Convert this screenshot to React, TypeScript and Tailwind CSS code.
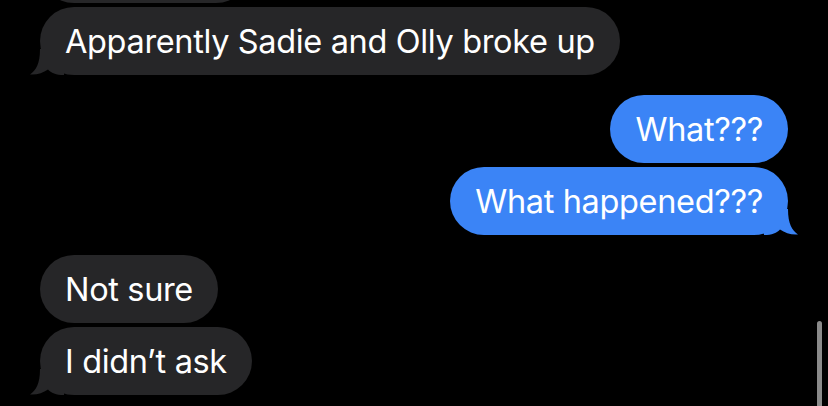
const grayTail = (
  <svg
    className="absolute -left-[10px] bottom-0 h-[26px] w-[34px]"
    viewBox="0 0 34 26"
    aria-hidden
  >
    <path d="M10 0 C10 15 6 21 0 25.5 C7 26 13 24 18 20.5 C21 24 26 26 34 26 L34 0 Z" fill="#262628" />
  </svg>
)

const blueTail = (
  <svg
    className="absolute -right-[10px] bottom-0 h-[26px] w-[34px]"
    viewBox="0 0 34 26"
    aria-hidden
  >
    <path d="M24 0 C24 15 28 21 34 25.5 C27 26 21 24 16 20.5 C13 24 8 26 0 26 L0 0 Z" fill="#3b84f6" />
  </svg>
)

function Received({ text, tail }: { text: string; tail?: boolean }) {
  return (
    <div className="relative flex h-[68px] w-fit items-center rounded-[34px] bg-[#262628] px-[25px] pt-[2px]">
      {tail && grayTail}
      <span className="relative">{text}</span>
    </div>
  )
}

function Sent({ text, tail }: { text: string; tail?: boolean }) {
  return (
    <div className="relative ml-auto flex h-[68px] w-fit items-center rounded-[34px] bg-[#3b84f6] px-[25px] pt-[2px]">
      {tail && blueTail}
      <span className="relative">{text}</span>
    </div>
  )
}

export default function App() {
  return (
    <div
      className="relative h-[406px] w-[828px] overflow-hidden bg-black text-[32.5px] leading-none tracking-[-0.35px] text-white"
      style={{ fontFamily: "Inter, 'Noto Sans', sans-serif" }}
    >
      <div className="flex flex-col pl-[40px] pr-[40px]">
        <div className="-mt-[65px] h-[68px] w-[210px] rounded-[34px] bg-[#262628]" />
        <div className="mt-[4px]">
          <Received text="Apparently Sadie and Olly broke up" tail />
        </div>
        <div className="mt-[20px] flex flex-col gap-[4px]">
          <Sent text="What???" />
          <Sent text="What happened???" tail />
        </div>
        <div className="mt-[20px] flex flex-col gap-[4px]">
          <Received text="Not sure" />
          <Received text="I didn’t ask" tail />
        </div>
      </div>
      <div className="absolute right-[6px] top-[321px] h-[100px] w-[5px] rounded-full bg-[#8a8a8a]" />
    </div>
  )
}
